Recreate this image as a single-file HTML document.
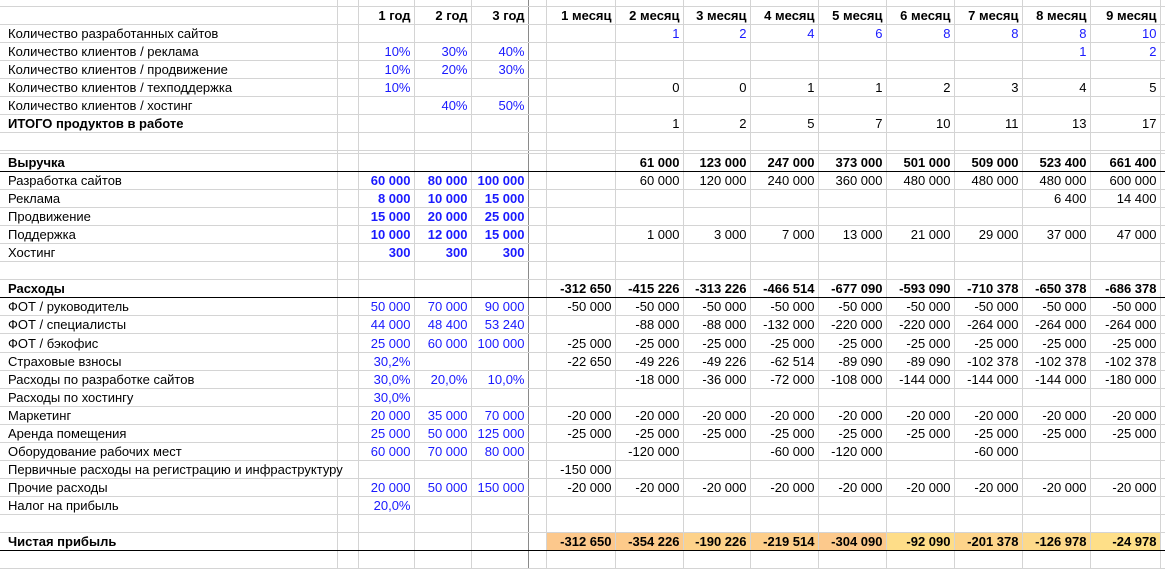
<!DOCTYPE html>
<html><head><meta charset="utf-8"><style>
body{margin:0;width:1165px;height:558px;overflow:hidden;background:#fff;font-family:"Liberation Sans",Arial,sans-serif;font-size:13px;color:#000}
table{border-collapse:collapse;table-layout:fixed;position:absolute;left:0;top:0;width:1165px}
td{border-right:1px solid #d4d4d4;border-bottom:1px solid #d4d4d4;height:17px;padding:0 3px 0 0;text-align:right;white-space:nowrap;overflow:visible;line-height:17px}
td:first-child{text-align:left;padding-left:8px}
tr.t td{height:6px;line-height:6px}
tr.s td{height:2px;line-height:2px}
tr.h td{font-weight:bold;border-bottom-color:#d4d4d4}
tr.x td{height:18px}
.b{color:#1a1aff}
.bb{color:#1a1aff;font-weight:bold}
tr.bo td{font-weight:bold}
tr.ln td{border-bottom:1px solid #000}
td.dv{border-right:1px solid #8a8a8a}
.o1{background:#fcc88c}.o2{background:#fdca8a}.o3{background:#fdd28a}.o4{background:#fdce8a}.o5{background:#fcc98c}.o6{background:#fedd88}.o7{background:#fdd48a}.o8{background:#fdd98a}.o9{background:#fedf88}
</style></head><body>
<table>
<colgroup><col style="width:337px"><col style="width:21px"><col style="width:56px"><col style="width:57px"><col style="width:57px"><col style="width:18px"><col style="width:69px"><col style="width:68px"><col style="width:67px"><col style="width:68px"><col style="width:68px"><col style="width:68px"><col style="width:68px"><col style="width:68px"><col style="width:70px"><col style="width:5px"></colgroup>
<tr class="t"><td></td><td></td><td></td><td></td><td class="dv"></td><td></td><td></td><td></td><td></td><td></td><td></td><td></td><td></td><td></td><td></td><td></td></tr>
<tr class="h"><td></td><td></td><td>1 год</td><td>2 год</td><td class="dv">3 год</td><td></td><td>1 месяц</td><td>2 месяц</td><td>3 месяц</td><td>4 месяц</td><td>5 месяц</td><td>6 месяц</td><td>7 месяц</td><td>8 месяц</td><td>9 месяц</td><td></td></tr>
<tr><td>Количество разработанных сайтов</td><td></td><td></td><td></td><td class="dv"></td><td></td><td></td><td class="b">1</td><td class="b">2</td><td class="b">4</td><td class="b">6</td><td class="b">8</td><td class="b">8</td><td class="b">8</td><td class="b">10</td><td></td></tr>
<tr><td>Количество клиентов / реклама</td><td></td><td class="b">10%</td><td class="b">30%</td><td class="b dv">40%</td><td></td><td></td><td></td><td></td><td></td><td></td><td></td><td></td><td class="b">1</td><td class="b">2</td><td></td></tr>
<tr><td>Количество клиентов / продвижение</td><td></td><td class="b">10%</td><td class="b">20%</td><td class="b dv">30%</td><td></td><td></td><td></td><td></td><td></td><td></td><td></td><td></td><td></td><td></td><td></td></tr>
<tr><td>Количество клиентов / техподдержка</td><td></td><td class="b">10%</td><td></td><td class="dv"></td><td></td><td></td><td>0</td><td>0</td><td>1</td><td>1</td><td>2</td><td>3</td><td>4</td><td>5</td><td></td></tr>
<tr><td>Количество клиентов / хостинг</td><td></td><td></td><td class="b">40%</td><td class="b dv">50%</td><td></td><td></td><td></td><td></td><td></td><td></td><td></td><td></td><td></td><td></td><td></td></tr>
<tr><td><b>ИТОГО продуктов в работе</b></td><td></td><td></td><td></td><td class="dv"></td><td></td><td></td><td>1</td><td>2</td><td>5</td><td>7</td><td>10</td><td>11</td><td>13</td><td>17</td><td></td></tr>
<tr><td></td><td></td><td></td><td></td><td class="dv"></td><td></td><td></td><td></td><td></td><td></td><td></td><td></td><td></td><td></td><td></td><td></td></tr>
<tr class="s"><td></td><td></td><td></td><td></td><td class="dv"></td><td></td><td></td><td></td><td></td><td></td><td></td><td></td><td></td><td></td><td></td><td></td></tr>
<tr class="bo ln"><td>Выручка</td><td></td><td></td><td></td><td class="dv"></td><td></td><td></td><td>61 000</td><td>123 000</td><td>247 000</td><td>373 000</td><td>501 000</td><td>509 000</td><td>523 400</td><td>661 400</td><td></td></tr>
<tr><td>Разработка сайтов</td><td></td><td class="bb">60 000</td><td class="bb">80 000</td><td class="bb dv">100 000</td><td></td><td></td><td>60 000</td><td>120 000</td><td>240 000</td><td>360 000</td><td>480 000</td><td>480 000</td><td>480 000</td><td>600 000</td><td></td></tr>
<tr><td>Реклама</td><td></td><td class="bb">8 000</td><td class="bb">10 000</td><td class="bb dv">15 000</td><td></td><td></td><td></td><td></td><td></td><td></td><td></td><td></td><td>6 400</td><td>14 400</td><td></td></tr>
<tr><td>Продвижение</td><td></td><td class="bb">15 000</td><td class="bb">20 000</td><td class="bb dv">25 000</td><td></td><td></td><td></td><td></td><td></td><td></td><td></td><td></td><td></td><td></td><td></td></tr>
<tr><td>Поддержка</td><td></td><td class="bb">10 000</td><td class="bb">12 000</td><td class="bb dv">15 000</td><td></td><td></td><td>1 000</td><td>3 000</td><td>7 000</td><td>13 000</td><td>21 000</td><td>29 000</td><td>37 000</td><td>47 000</td><td></td></tr>
<tr><td>Хостинг</td><td></td><td class="bb">300</td><td class="bb">300</td><td class="bb dv">300</td><td></td><td></td><td></td><td></td><td></td><td></td><td></td><td></td><td></td><td></td><td></td></tr>
<tr><td></td><td></td><td></td><td></td><td class="dv"></td><td></td><td></td><td></td><td></td><td></td><td></td><td></td><td></td><td></td><td></td><td></td></tr>
<tr class="bo ln"><td>Расходы</td><td></td><td></td><td></td><td class="dv"></td><td></td><td>-312 650</td><td>-415 226</td><td>-313 226</td><td>-466 514</td><td>-677 090</td><td>-593 090</td><td>-710 378</td><td>-650 378</td><td>-686 378</td><td></td></tr>
<tr><td>ФОТ / руководитель</td><td></td><td class="b">50 000</td><td class="b">70 000</td><td class="b dv">90 000</td><td></td><td>-50 000</td><td>-50 000</td><td>-50 000</td><td>-50 000</td><td>-50 000</td><td>-50 000</td><td>-50 000</td><td>-50 000</td><td>-50 000</td><td></td></tr>
<tr><td>ФОТ / специалисты</td><td></td><td class="b">44 000</td><td class="b">48 400</td><td class="b dv">53 240</td><td></td><td></td><td>-88 000</td><td>-88 000</td><td>-132 000</td><td>-220 000</td><td>-220 000</td><td>-264 000</td><td>-264 000</td><td>-264 000</td><td></td></tr>
<tr class="x"><td>ФОТ / бэкофис</td><td></td><td class="b">25 000</td><td class="b">60 000</td><td class="b dv">100 000</td><td></td><td>-25 000</td><td>-25 000</td><td>-25 000</td><td>-25 000</td><td>-25 000</td><td>-25 000</td><td>-25 000</td><td>-25 000</td><td>-25 000</td><td></td></tr>
<tr><td>Страховые взносы</td><td></td><td class="b">30,2%</td><td></td><td class="dv"></td><td></td><td>-22 650</td><td>-49 226</td><td>-49 226</td><td>-62 514</td><td>-89 090</td><td>-89 090</td><td>-102 378</td><td>-102 378</td><td>-102 378</td><td></td></tr>
<tr><td>Расходы по разработке сайтов</td><td></td><td class="b">30,0%</td><td class="b">20,0%</td><td class="b dv">10,0%</td><td></td><td></td><td>-18 000</td><td>-36 000</td><td>-72 000</td><td>-108 000</td><td>-144 000</td><td>-144 000</td><td>-144 000</td><td>-180 000</td><td></td></tr>
<tr><td>Расходы по хостингу</td><td></td><td class="b">30,0%</td><td></td><td class="dv"></td><td></td><td></td><td></td><td></td><td></td><td></td><td></td><td></td><td></td><td></td><td></td></tr>
<tr><td>Маркетинг</td><td></td><td class="b">20 000</td><td class="b">35 000</td><td class="b dv">70 000</td><td></td><td>-20 000</td><td>-20 000</td><td>-20 000</td><td>-20 000</td><td>-20 000</td><td>-20 000</td><td>-20 000</td><td>-20 000</td><td>-20 000</td><td></td></tr>
<tr><td>Аренда помещения</td><td></td><td class="b">25 000</td><td class="b">50 000</td><td class="b dv">125 000</td><td></td><td>-25 000</td><td>-25 000</td><td>-25 000</td><td>-25 000</td><td>-25 000</td><td>-25 000</td><td>-25 000</td><td>-25 000</td><td>-25 000</td><td></td></tr>
<tr><td>Оборудование рабочих мест</td><td></td><td class="b">60 000</td><td class="b">70 000</td><td class="b dv">80 000</td><td></td><td></td><td>-120 000</td><td></td><td>-60 000</td><td>-120 000</td><td></td><td>-60 000</td><td></td><td></td><td></td></tr>
<tr><td>Первичные расходы на регистрацию и инфраструктуру</td><td></td><td></td><td></td><td class="dv"></td><td></td><td>-150 000</td><td></td><td></td><td></td><td></td><td></td><td></td><td></td><td></td><td></td></tr>
<tr><td>Прочие расходы</td><td></td><td class="b">20 000</td><td class="b">50 000</td><td class="b dv">150 000</td><td></td><td>-20 000</td><td>-20 000</td><td>-20 000</td><td>-20 000</td><td>-20 000</td><td>-20 000</td><td>-20 000</td><td>-20 000</td><td>-20 000</td><td></td></tr>
<tr><td>Налог на прибыль</td><td></td><td class="b">20,0%</td><td></td><td class="dv"></td><td></td><td></td><td></td><td></td><td></td><td></td><td></td><td></td><td></td><td></td><td></td></tr>
<tr><td></td><td></td><td></td><td></td><td class="dv"></td><td></td><td></td><td></td><td></td><td></td><td></td><td></td><td></td><td></td><td></td><td></td></tr>
<tr class="bo ln"><td>Чистая прибыль</td><td></td><td></td><td></td><td class="dv"></td><td></td><td class="o1">-312 650</td><td class="o2">-354 226</td><td class="o3">-190 226</td><td class="o4">-219 514</td><td class="o5">-304 090</td><td class="o6">-92 090</td><td class="o7">-201 378</td><td class="o8">-126 978</td><td class="o9">-24 978</td><td></td></tr>
<tr><td></td><td></td><td></td><td></td><td class="dv"></td><td></td><td></td><td></td><td></td><td></td><td></td><td></td><td></td><td></td><td></td><td></td></tr>
</table>
</body></html>
